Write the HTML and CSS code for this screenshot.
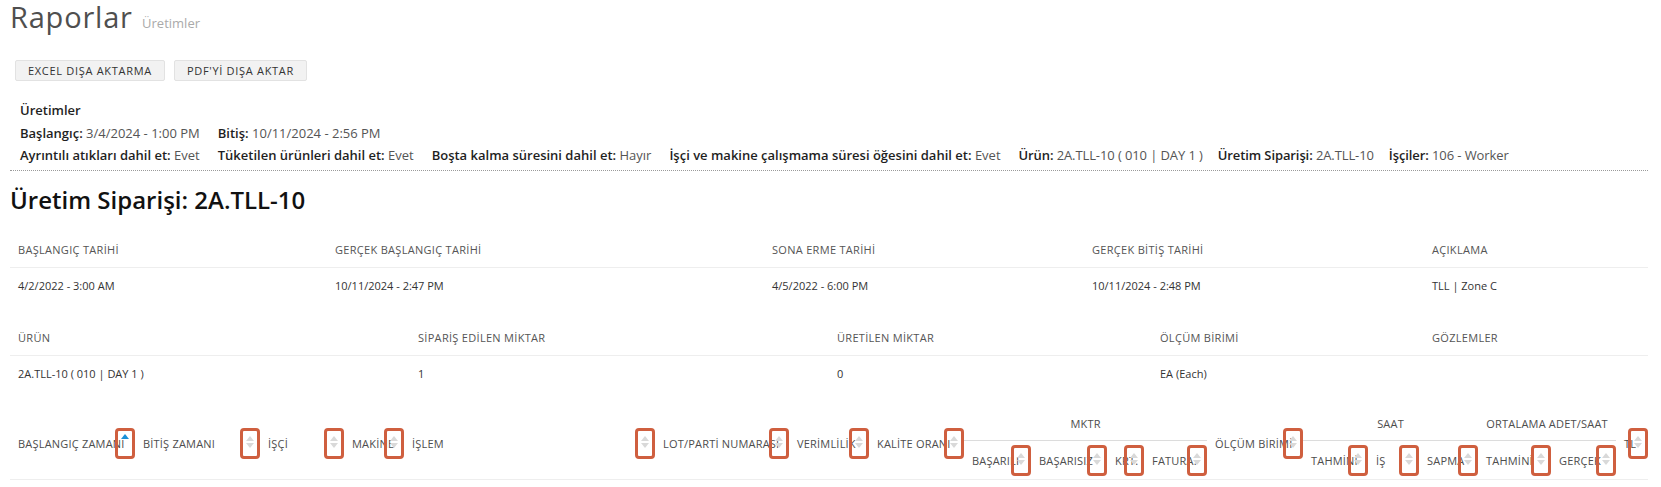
FILE: index.html
```html
<!DOCTYPE html>
<html lang="tr">
<head>
<meta charset="utf-8">
<title>Raporlar</title>
<link rel="stylesheet" href="styles.css">
</head>
<body>
<div class="page">
  <h1 class="title">Raporlar <small class="subtitle">Üretimler</small></h1>

  <div class="actions">
    <button class="btn">EXCEL DIŞA AKTARMA</button>
    <button class="btn">PDF'Yİ DIŞA AKTAR</button>
  </div>

  <div class="info">
    <div class="info-line"><b>Üretimler</b></div>
    <div class="info-line">
      <span class="item"><b>Başlangıç:</b> 3/4/2024 - 1:00 PM</span>
      <span class="item"><b>Bitiş:</b> 10/11/2024 - 2:56 PM</span>
    </div>
    <div class="info-line">
      <span class="item"><b>Ayrıntılı atıkları dahil et:</b> Evet</span>
      <span class="item"><b>Tüketilen ürünleri dahil et:</b> Evet</span>
      <span class="item"><b>Boşta kalma süresini dahil et:</b> Hayır</span>
      <span class="item"><b>İşçi ve makine çalışmama süresi öğesini dahil et:</b> Evet</span>
      <span class="item tight"><b>Ürün:</b> 2A.TLL-10 ( 010 | DAY 1 )</span>
      <span class="item tight"><b>Üretim Siparişi:</b> 2A.TLL-10</span>
      <span class="item tight"><b>İşçiler:</b> 106 - Worker</span>
    </div>
  </div>

  <h2 class="order">Üretim Siparişi: 2A.TLL-10</h2>

  <table class="grid">
    <colgroup>
      <col style="width:317px"><col style="width:437px"><col style="width:320px"><col style="width:340px"><col style="width:224px">
    </colgroup>
    <thead>
      <tr><th>BAŞLANGIÇ TARİHİ</th><th>GERÇEK BAŞLANGIÇ TARİHİ</th><th>SONA ERME TARİHİ</th><th>GERÇEK BİTİŞ TARİHİ</th><th>AÇIKLAMA</th></tr>
    </thead>
    <tbody>
      <tr><td>4/2/2022 - 3:00 AM</td><td>10/11/2024 - 2:47 PM</td><td>4/5/2022 - 6:00 PM</td><td>10/11/2024 - 2:48 PM</td><td>TLL | Zone C</td></tr>
    </tbody>
  </table>

  <table class="grid">
    <colgroup>
      <col style="width:400px"><col style="width:419px"><col style="width:323px"><col style="width:272px"><col style="width:224px">
    </colgroup>
    <thead>
      <tr><th>ÜRÜN</th><th>SİPARİŞ EDİLEN MİKTAR</th><th>ÜRETİLEN MİKTAR</th><th>ÖLÇÜM BİRİMİ</th><th>GÖZLEMLER</th></tr>
    </thead>
    <tbody>
      <tr><td>2A.TLL-10 ( 010 | DAY 1 )</td><td>1</td><td>0</td><td>EA (Each)</td><td></td></tr>
    </tbody>
  </table>

  <table class="grid sortable">
    <colgroup>
      <col style="width:125px"><col style="width:125px"><col style="width:84px"><col style="width:60px"><col style="width:251px">
      <col style="width:134px"><col style="width:80px"><col style="width:95px">
      <col style="width:67px"><col style="width:76px"><col style="width:37px"><col style="width:63px">
      <col style="width:96px">
      <col style="width:65px"><col style="width:51px"><col style="width:59px">
      <col style="width:73px"><col style="width:65px">
      <col style="width:32px">
    </colgroup>
    <thead>
      <tr class="top-row">
        <th rowspan="2" class="s">BAŞLANGIÇ ZAMANI<span class="sort asc"></span></th>
        <th rowspan="2" class="s">BİTİŞ ZAMANI<span class="sort"></span></th>
        <th rowspan="2" class="s">İŞÇİ<span class="sort"></span></th>
        <th rowspan="2" class="s">MAKİNE<span class="sort"></span></th>
        <th rowspan="2" class="s">İŞLEM<span class="sort"></span></th>
        <th rowspan="2" class="s">LOT/PARTİ NUMARASI<span class="sort"></span></th>
        <th rowspan="2" class="s">VERİMLİLİK<span class="sort"></span></th>
        <th rowspan="2" class="s">KALİTE ORANI<span class="sort"></span></th>
        <th colspan="4" class="group">MKTR</th>
        <th rowspan="2" class="s">ÖLÇÜM BİRİMİ<span class="sort"></span></th>
        <th colspan="3" class="group">SAAT</th>
        <th colspan="2" class="group">ORTALAMA ADET/SAAT</th>
        <th rowspan="2" class="s">TL<span class="sort"></span></th>
      </tr>
      <tr class="sub-row">
        <th class="s">BAŞARILI<span class="sort"></span></th>
        <th class="s">BAŞARISIZ<span class="sort"></span></th>
        <th class="s">KRT.<span class="sort"></span></th>
        <th class="s">FATURA.<span class="sort"></span></th>
        <th class="s">TAHMİNİ<span class="sort"></span></th>
        <th class="s">İŞ<span class="sort"></span></th>
        <th class="s">SAPMA<span class="sort"></span></th>
        <th class="s">TAHMİNİ<span class="sort"></span></th>
        <th class="s">GERÇEK<span class="sort"></span></th>
      </tr>
    </thead>
  </table>
</div>
</body>
</html>
```

FILE: styles.css
```css
* { box-sizing: border-box; }

html, body {
  margin: 0;
  padding: 0;
  background: #ffffff;
}

body {
  font-family: "Open Sans", "Noto Sans", sans-serif;
  color: #333333;
}

.page {
  padding: 0 13px 0 10px;
}

.title {
  margin: 0;
  height: 34px;
  font-size: 29px;
  line-height: 34px;
  font-weight: 400;
  letter-spacing: 0.8px;
  color: #4f4f4f;
}

.subtitle {
  margin-left: 1px;
  font-size: 13px;
  line-height: 1;
  letter-spacing: 0;
  color: #aaaaaa;
}

.actions {
  display: flex;
  gap: 9px;
  margin: 26px 0 0 5px;
}

.btn {
  height: 21px;
  padding: 0 12px;
  border: 1px solid #e2e2e2;
  border-radius: 2px;
  background: #f2f2f2;
  color: #333333;
  font-family: "Open Sans", sans-serif;
  font-size: 11px;
  line-height: 19px;
  letter-spacing: 0.7px;
}

.info {
  margin-top: 18px;
  padding: 0 0 3px 10px;
  border-bottom: 1px dotted #9a9a9a;
  font-size: 13px;
  line-height: 22.5px;
  color: #555555;
}

.info b {
  font-weight: 600;
  color: #1f1f1f;
}

.info-line {
  display: flex;
  white-space: nowrap;
}

.item {
  margin-right: 18px;
}

.item.tight {
  margin-right: 15px;
  letter-spacing: -0.1px;
}

.order {
  margin: 13px 0 16px;
  font-size: 24px;
  line-height: 32px;
  font-weight: 600;
  color: #111111;
}

.grid {
  width: 1638px;
  table-layout: fixed;
  border-collapse: collapse;
  margin-bottom: 16px;
  font-size: 11px;
}

.grid th {
  height: 36px;
  padding: 0 8px;
  text-align: left;
  font-weight: 400;
  letter-spacing: 0.3px;
  color: #555555;
  border-bottom: 1px solid #eeeeee;
  white-space: nowrap;
}

.grid td {
  height: 36px;
  padding: 0 8px;
  color: #333333;
  white-space: nowrap;
}

.sortable th {
  position: relative;
  letter-spacing: 0.2px;
  color: #4d4d4d;
  overflow: visible;
}

.sortable .top-row th.group {
  height: 33px;
  text-align: center;
  border-bottom: 1px solid #dcdcdc;
}

.sortable .sub-row th {
  height: 39px;
}

.sort {
  position: absolute;
  right: 0;
  top: 50%;
  width: 20px;
  height: 31px;
  margin-top: -15.5px;
  border: 3px solid #cf5f3f;
  border-radius: 4px;
}

.sort::before,
.sort::after {
  content: "";
  position: absolute;
  left: 50%;
  margin-left: -4.5px;
  border-left: 4.5px solid transparent;
  border-right: 4.5px solid transparent;
}

.sort::before {
  top: 5px;
  border-bottom: 5.5px solid #d9d9d9;
}

.sort::after {
  top: 12px;
  border-top: 5.5px solid #d9d9d9;
}

.sort.asc::before {
  top: 3px;
  border-bottom-color: #1b90d8;
}

.sort.asc::after {
  display: none;
}
```
